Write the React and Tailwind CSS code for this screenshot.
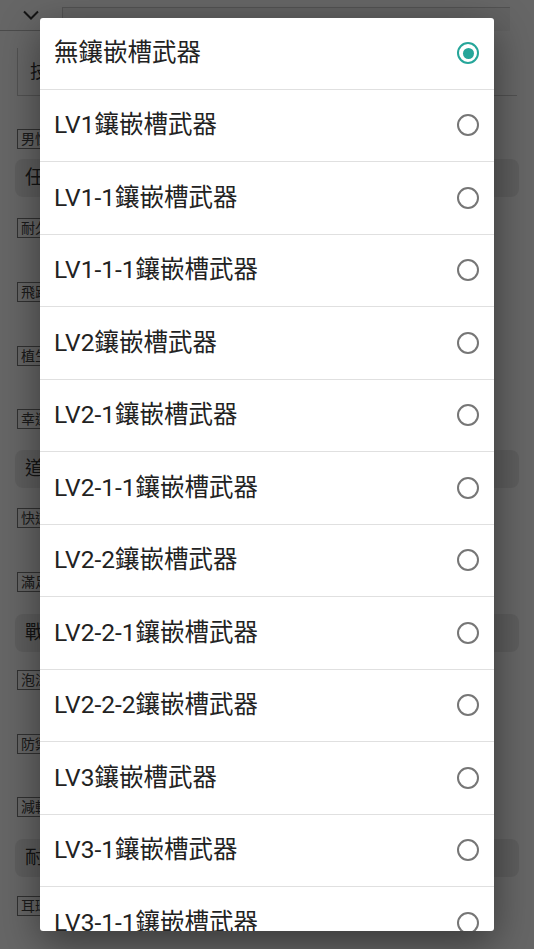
import { useState } from "react"

const options = [
  "無鑲嵌槽武器",
  "LV1鑲嵌槽武器",
  "LV1-1鑲嵌槽武器",
  "LV1-1-1鑲嵌槽武器",
  "LV2鑲嵌槽武器",
  "LV2-1鑲嵌槽武器",
  "LV2-1-1鑲嵌槽武器",
  "LV2-2鑲嵌槽武器",
  "LV2-2-1鑲嵌槽武器",
  "LV2-2-2鑲嵌槽武器",
  "LV3鑲嵌槽武器",
  "LV3-1鑲嵌槽武器",
  "LV3-1-1鑲嵌槽武器",
  "LV3-2鑲嵌槽武器",
]

// background form, drawn under the dim overlay
const fields = [
  { type: "label", text: "男性", mt: "mt-[33px]" },
  { type: "button", text: "任務", mt: "mt-[10px]" },
  { type: "label", text: "耐久力", mt: "mt-[21px]" },
  { type: "label", text: "飛距離", mt: "mt-[44px]" },
  { type: "label", text: "植生", mt: "mt-[44px]" },
  { type: "label", text: "幸運", mt: "mt-[43px]" },
  { type: "button", text: "道具", mt: "mt-[21px]" },
  { type: "label", text: "快速", mt: "mt-[20px]" },
  { type: "label", text: "滿足", mt: "mt-[44px]" },
  { type: "button", text: "戰鬥", mt: "mt-[22px]" },
  { type: "label", text: "泡沫", mt: "mt-[18px]" },
  { type: "label", text: "防禦", mt: "mt-[44px]" },
  { type: "label", text: "減輕", mt: "mt-[43px]" },
  { type: "button", text: "耐性", mt: "mt-[22px]" },
  { type: "label", text: "耳環", mt: "mt-[19px]" },
]

function Field({ type, text, mt }) {
  if (type === "button") {
    return (
      <div className={`${mt} mx-[15px] h-[38px] rounded-lg bg-[#ececec] flex items-center px-[10px] text-[19px] text-[#333]`}>
        {text}
      </div>
    )
  }
  return (
    <div className={`${mt} ml-[17px] flex items-start`}>
      <div className="h-[20px] border border-[#7a7a7a] px-[3px] text-[14px] leading-[18px] text-[#444]">{text}</div>
    </div>
  )
}

function Radio({ checked }) {
  if (checked) {
    return (
      <div className="w-[22px] h-[22px] rounded-full border-2 border-[#26a69a] flex items-center justify-center">
        <div className="w-[11px] h-[11px] rounded-full bg-[#26a69a]" />
      </div>
    )
  }
  return <div className="w-[22px] h-[22px] rounded-full border-2 border-[#767676]" />
}

export default function App() {
  const [selected, setSelected] = useState(0)

  return (
    <div className="relative w-[534px] h-[949px] overflow-hidden bg-white font-['Roboto','Noto_Sans_CJK_TC',sans-serif]">
      {/* page under the dialog */}
      <div className="flex flex-col">
        <div className="flex h-[31px]">
          <div className="w-[62px] border-b border-[#bbb] flex items-center justify-center">
            <svg width="18" height="10" viewBox="0 0 18 10" fill="none" stroke="#333" strokeWidth="2">
              <path d="M2 1.5l7 7 7-7" />
            </svg>
          </div>
          <div className="flex-1 mt-[7px] mr-[24px] border-t border-l border-[#ccc] bg-[#f4f4f4]" />
        </div>
        <div className="mt-[17px] mx-[17px] h-[48px] border-l border-b border-[#ccc] flex items-center pl-[12px] text-[18px] text-[#333]">
          技能
        </div>
        {fields.map((f, i) => (
          <Field key={i} {...f} />
        ))}
      </div>

      {/* dim overlay + dialog */}
      <div className="absolute inset-0 bg-black/60 pt-[18px] px-[40px]">
        <div className="h-[913px] bg-white rounded-[3px] overflow-hidden shadow-[0_12px_40px_rgba(0,0,0,0.45)]">
          {options.map((o, i) => (
            <div
              key={o}
              onClick={() => setSelected(i)}
              className={`flex items-center justify-between pl-[14px] pr-[15px] border-b border-[#e0e0e0] ${i === 0 ? "h-[71.5px]" : "h-[72.5px]"}`}
            >
              <span className="text-[24.5px] text-[#222] leading-none">{o}</span>
              <Radio checked={selected === i} />
            </div>
          ))}
        </div>
      </div>
    </div>
  )
}
